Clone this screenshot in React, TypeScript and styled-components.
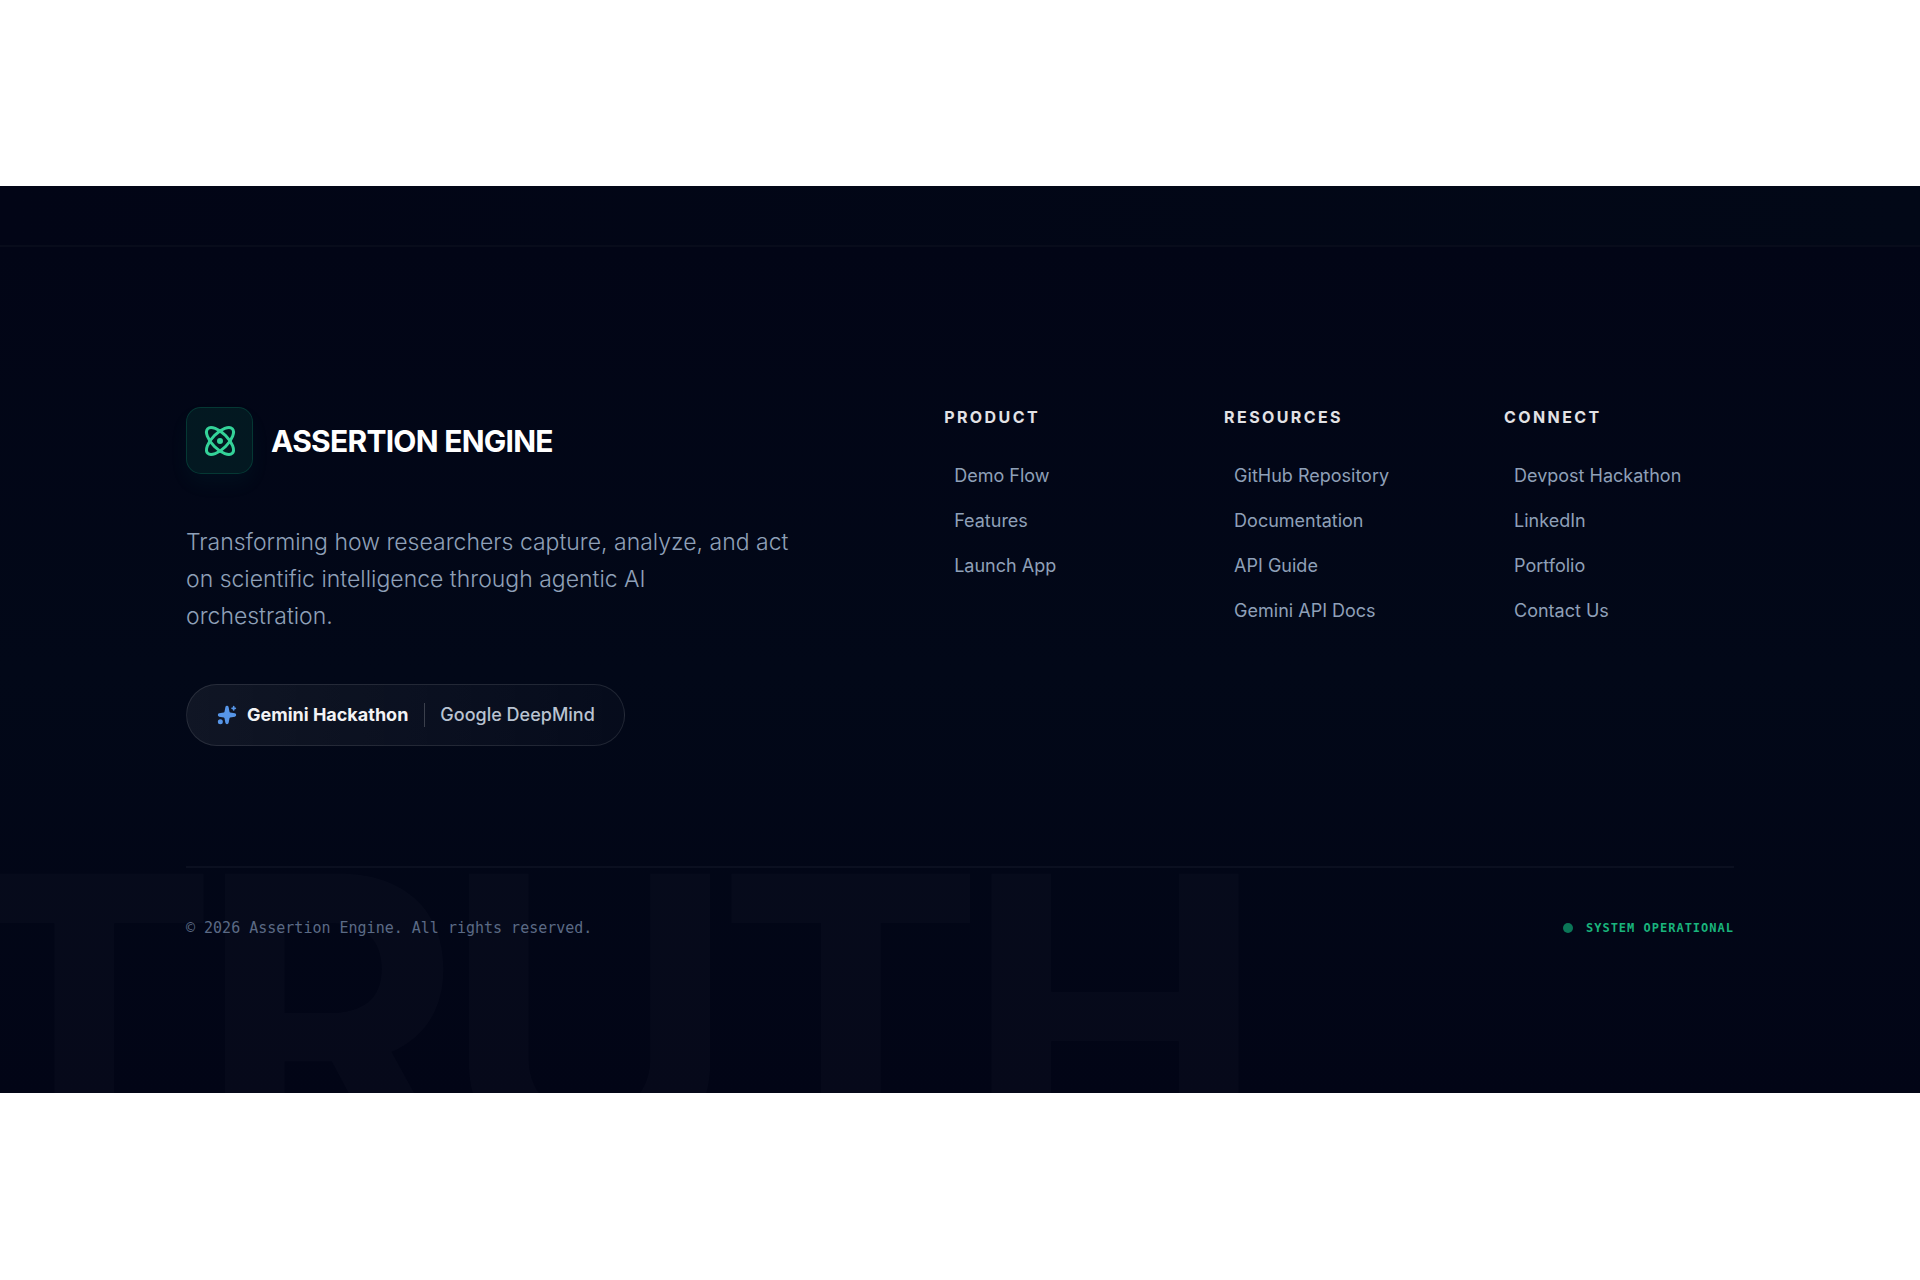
import React from "react";
import styled, { createGlobalStyle } from "styled-components";
import { Atom, Sparkles } from "lucide-react";

const sans = `Inter, "Liberation Sans", sans-serif`;
const mono = `"DejaVu Sans Mono", "Liberation Mono", monospace`;

const GlobalStyle = createGlobalStyle`
  *, *::before, *::after { box-sizing: border-box; }
  body { margin: 0; background: #ffffff; font-family: ${sans}; }
  h2, p, ul { margin: 0; padding: 0; }
`;

const Page = styled.div`
  padding: 186px 0;
`;

const PreviousSection = styled.div`
  height: 59px;
  background: linear-gradient(90deg, #020516, #020817);
`;

const Footer = styled.footer`
  position: relative;
  overflow: hidden;
  padding: 160px 80px 155px;
  border-top: 2px solid #080c1b;
  background: linear-gradient(180deg, #020516 0%, #020818 50%, #020516 100%);
`;

const Watermark = styled.div`
  position: absolute;
  left: -50px;
  bottom: -127px;
  color: rgba(255, 255, 255, 0.02);
  font-size: 402px;
  font-weight: 700;
  line-height: 400px;
  letter-spacing: -20px;
  white-space: nowrap;
  pointer-events: none;
  user-select: none;
`;

const Container = styled.div`
  position: relative;
  max-width: 1548px;
  margin: 0 auto;
`;

const Top = styled.div`
  display: grid;
  grid-template-columns: 5fr 6fr;
  gap: 100px;
  padding-bottom: 120px;
`;

const Brand = styled.div`
  display: flex;
  flex-direction: column;
  align-items: flex-start;
`;

const Logo = styled.a`
  display: flex;
  align-items: center;
  gap: 18px;
  color: #ffffff;
  text-decoration: none;
`;

const LogoMark = styled.span`
  display: grid;
  place-items: center;
  width: 67px;
  height: 67px;
  border: 1px solid rgba(16, 185, 129, 0.2);
  border-radius: 15px;
  background: rgba(16, 185, 129, 0.1);
  box-shadow: 0 10px 20px rgba(16, 185, 129, 0.05);
  color: #34d399;
`;

const LogoName = styled.span`
  font-size: 30px;
  font-weight: 700;
  line-height: 40px;
  letter-spacing: -0.025em;
`;

const Tagline = styled.p`
  max-width: 605px;
  margin-top: 50px;
  color: #8fa0b8;
  font-size: 23px;
  font-weight: 300;
  line-height: 37px;
`;

const Badge = styled.div`
  display: flex;
  align-items: center;
  height: 62px;
  margin-top: 49px;
  padding: 0 29px 0 30px;
  border: 1px solid rgba(255, 255, 255, 0.1);
  border-radius: 31px;
  background: linear-gradient(90deg, rgba(255, 255, 255, 0.06), rgba(255, 255, 255, 0.02));
  font-size: 18px;
  line-height: 24px;
`;

const BadgeIcon = styled.span`
  display: flex;
  margin-right: 10px;
  color: #5796e8;
`;

const Event = styled.span`
  color: #f3f3f5;
  font-weight: 700;
`;

const Host = styled.span`
  margin-left: 16px;
  padding-left: 15px;
  border-left: 1px solid rgba(255, 255, 255, 0.2);
  color: #b9c3d1;
  font-weight: 500;
`;

const Columns = styled.nav`
  display: grid;
  grid-template-columns: repeat(3, 1fr);
  gap: 50px;
`;

const ColumnTitle = styled.h2`
  color: #e2e2e5;
  font-size: 16px;
  font-weight: 700;
  line-height: 20px;
  letter-spacing: 0.15em;
  text-transform: uppercase;
`;

const LinkList = styled.ul`
  display: grid;
  gap: 15px;
  margin-top: 34px;
  list-style: none;
`;

const FooterLink = styled.a`
  display: block;
  padding-left: 10px;
  color: #8fa0b8;
  font-size: 18px;
  line-height: 30px;
  text-decoration: none;
  white-space: nowrap;
`;

const Bottom = styled.div`
  display: flex;
  align-items: center;
  justify-content: space-between;
  padding-top: 50px;
  border-top: 2px solid rgba(255, 255, 255, 0.04);
  font-family: ${mono};
`;

const Copyright = styled.p`
  color: #5b6a85;
  font-size: 15px;
  line-height: 20px;
`;

const Status = styled.p`
  display: flex;
  align-items: center;
  gap: 13px;
  color: #19b47c;
  font-size: 12px;
  font-weight: 700;
  line-height: 20px;
  letter-spacing: 1px;
  text-transform: uppercase;
`;

const StatusDot = styled.span`
  width: 10px;
  height: 10px;
  border-radius: 50%;
  background: #0b7657;
`;

const columns = [
  { title: "Product", links: ["Demo Flow", "Features", "Launch App"] },
  { title: "Resources", links: ["GitHub Repository", "Documentation", "API Guide", "Gemini API Docs"] },
  { title: "Connect", links: ["Devpost Hackathon", "LinkedIn", "Portfolio", "Contact Us"] },
];

export default function App() {
  return (
    <>
      <GlobalStyle />
      <Page>
        <PreviousSection />
        <Footer>
          <Watermark aria-hidden="true">TRUTH</Watermark>
          <Container>
            <Top>
              <Brand>
                <Logo href="#">
                  <LogoMark>
                    <Atom size={36} />
                  </LogoMark>
                  <LogoName>ASSERTION ENGINE</LogoName>
                </Logo>
                <Tagline>
                  Transforming how researchers capture, analyze, and act on scientific intelligence
                  through agentic AI orchestration.
                </Tagline>
                <Badge>
                  <BadgeIcon>
                    <Sparkles size={20} fill="currentColor" />
                  </BadgeIcon>
                  <Event>Gemini Hackathon</Event>
                  <Host>Google DeepMind</Host>
                </Badge>
              </Brand>
              <Columns aria-label="Footer">
                {columns.map((column) => (
                  <div key={column.title}>
                    <ColumnTitle>{column.title}</ColumnTitle>
                    <LinkList>
                      {column.links.map((link) => (
                        <li key={link}>
                          <FooterLink href="#">{link}</FooterLink>
                        </li>
                      ))}
                    </LinkList>
                  </div>
                ))}
              </Columns>
            </Top>
            <Bottom>
              <Copyright>© 2026 Assertion Engine. All rights reserved.</Copyright>
              <Status>
                <StatusDot />
                System Operational
              </Status>
            </Bottom>
          </Container>
        </Footer>
      </Page>
    </>
  );
}
